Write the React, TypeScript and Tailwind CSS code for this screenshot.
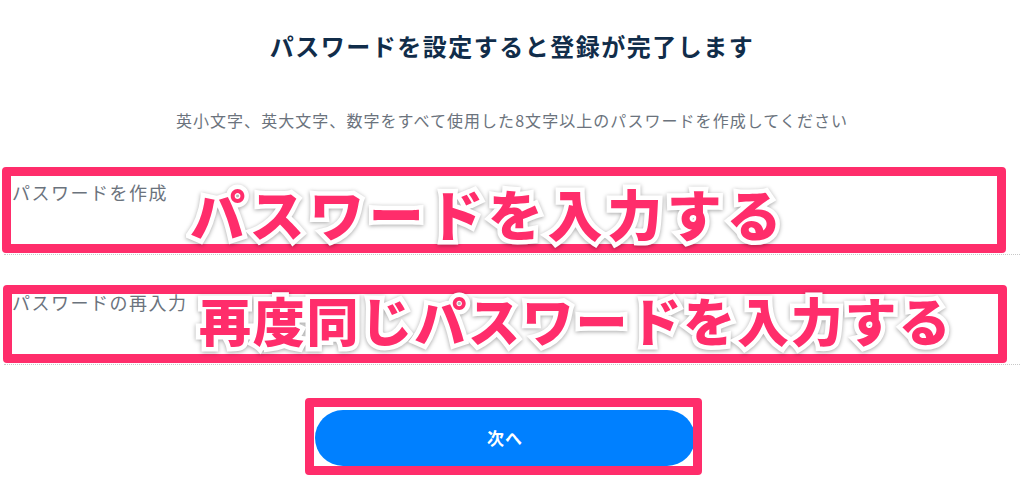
const PINK = 'border-[#ff2d6b]'

const Field = ({ label, inputClass }: { label: string; inputClass: string }) => {
  return (
    <div className="w-full flex flex-col">
      <label className="pl-[12px] text-[18px] leading-[24px] tracking-[1.5px] text-[#6b737d]">{label}</label>
      <input type="password" className={`mx-[4px] border-b border-dotted border-[#c8c8c8] outline-none bg-transparent ${inputClass}`} />
    </div>
  )
}

const Note = ({ text, className }: { text: string; className: string }) => {
  return (
    <div
      className={`absolute font-black leading-none whitespace-nowrap text-[#ff2d6b] [-webkit-text-stroke:9px_#ffffff] [paint-order:stroke_fill] drop-shadow-[0_1px_2px_rgba(0,0,0,0.35)] ${className}`}
    >
      {text}
    </div>
  )
}

export default function App() {
  return (
    <div className="relative w-[1024px] h-[494px] overflow-hidden bg-white font-['Noto_Sans_CJK_JP','Noto_Sans',sans-serif]">
      <div className="flex flex-col items-center pt-[30px]">
        <h1 className="text-[24px] leading-[32px] font-bold tracking-[1.5px] text-[#112d4a]">
          パスワードを設定すると登録が完了します
        </h1>
        <p className="mt-[46px] text-[16px] leading-[24px] tracking-[1.05px] text-[#6b737d]">
          英小文字、英大文字、数字をすべて使用した8文字以上のパスワードを作成してください
        </p>
        <div className="mt-[48px] w-full">
          <Field label="パスワードを作成" inputClass="h-[51px]" />
        </div>
        <div className="mt-[35px] w-full">
          <Field label="パスワードの再入力" inputClass="h-[51px]" />
        </div>
        <div className="mt-[45px] self-start ml-[315px]">
          <button className="w-[380px] h-[56px] rounded-full bg-[#0080ff] text-white font-bold text-[17px] tracking-[1px]">
            次へ
          </button>
        </div>
      </div>

      {/* annotations drawn over the form */}
      <div className={`absolute left-[2px] top-[167px] w-[1004px] h-[86px] border-[9px] rounded-[4px] ${PINK}`} />
      <div className={`absolute left-[3px] top-[285px] w-[1004px] h-[78px] border-[9px] rounded-[4px] ${PINK}`} />
      <div className={`absolute left-[305px] top-[398px] w-[397px] h-[77px] border-[9px] rounded-[4px] ${PINK}`} />
      <Note text="パスワードを入力する" className="left-[190px] top-[185px] text-[55px] tracking-[4.6px]" />
      <Note text="再度同じパスワードを入力する" className="left-[199px] top-[294px] text-[52px] tracking-[1.8px]" />
    </div>
  )
}
